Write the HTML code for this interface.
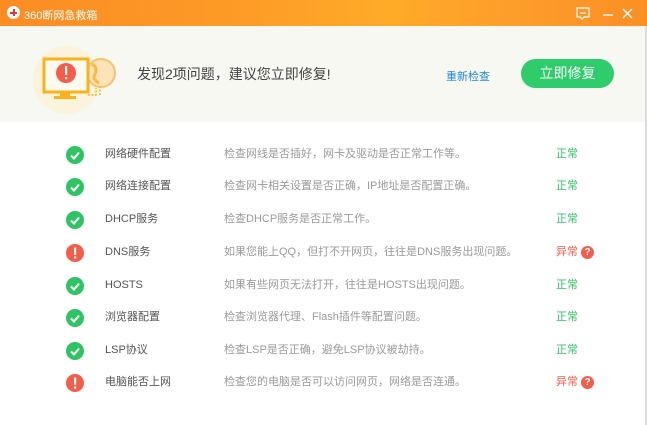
<!DOCTYPE html>
<html><head><meta charset="utf-8"><style>
*{margin:0;padding:0;box-sizing:border-box}
body{width:647px;height:425px;overflow:hidden;background:#fff;font-family:"Liberation Sans","Noto Sans CJK SC",sans-serif;position:relative}
.title{position:absolute;left:0;top:0;width:647px;height:26px;background:linear-gradient(90deg,#fb8c24 0%,#fd9a26 35%,#ffab28 60%,#fd9d2a 80%,#fb8f24 100%);color:#fff;font-size:12px}
.head{position:absolute;left:0;top:26px;width:647px;height:96px;background:#f7f8f1}
.rb{position:absolute;right:0;top:26px;width:2px;height:399px;background:#ddd}
.row{position:absolute;left:0;height:20px;width:640px;font-size:11px;line-height:14px}
.row .ic{position:absolute;left:66px;top:1px;width:18px;height:18px;border-radius:50%}
.row .n{position:absolute;left:105px;top:2px;color:#555}
.row .d{position:absolute;left:224px;top:2px;color:#9a9a9a}
.row .s{position:absolute;left:556px;top:2px;color:#2fc463}
.row .s.b{color:#f65c4a}
.q{position:absolute;left:581px;top:3px;width:13px;height:13px;border-radius:50%;background:#f65c4a;color:#fff;font-size:10px;font-weight:bold;text-align:center;line-height:13px}
</style></head><body>
<div class="title">
<div style="position:absolute;left:7px;top:6px;width:13px;height:13px;border-radius:50%;background:#fff"></div>
<div style="position:absolute;left:10px;top:11.5px;width:7px;height:2px;background:#e8352f"></div>
<div style="position:absolute;left:12.5px;top:9px;width:2px;height:7px;background:#e8352f"></div>
<div style="position:absolute;left:24px;top:7px;font-size:11px">360断网急救箱</div>
<svg style="position:absolute;left:575px;top:6px" width="70" height="16">
<path d="M2 2h12v9h-5l-2 2-2-2h-3z" fill="none" stroke="#fff" stroke-width="1.2"/><path d="M5 7h6" stroke="#fff" stroke-width="1.2"/>
<path d="M28 9h10" stroke="#fff" stroke-width="1.3"/>
<path d="M48 3l9 9M57 3l-9 9" stroke="#fff" stroke-width="1.4"/>
</svg>
</div>
<div class="head">
<div style="position:absolute;left:33px;top:20px;width:68px;height:68px;border-radius:50%;background:#fbf3dc"></div>
<svg style="position:absolute;left:40px;top:24px" width="80" height="80">
<circle cx="61" cy="23" r="14" fill="#fde3b8" stroke="#fbc16a" stroke-width="2"/>
<path d="M52 14q6 4 3 10q-3 5 4 9" fill="none" stroke="#fbb84a" stroke-width="3"/>
<path d="M48 45h8v-7M60 45v-8" fill="none" stroke="#f9b21c" stroke-width="1.5" stroke-dasharray="2 1.5"/>
<rect x="4" y="9" width="44" height="33" fill="#fffaf0" stroke="#f9b21c" stroke-width="3"/>
<rect x="20" y="42" width="10" height="5" fill="#f9b21c"/>
<rect x="14" y="46" width="22" height="3" fill="#f9b21c"/>
<circle cx="26" cy="23" r="10" fill="#f65c4a"/>
<rect x="25" y="16" width="2.2" height="9" fill="#fff"/><rect x="25" y="27" width="2.2" height="2.2" fill="#fff"/>
</svg>
<div style="position:absolute;left:137px;top:38px;font-size:14px;color:#444">发现2项问题，建议您立即修复!</div>
<div style="position:absolute;left:446px;top:42px;font-size:11px;color:#1f8ae0">重新检查</div>
<div style="position:absolute;left:521px;top:33px;width:93px;height:29px;border-radius:15px;background:#2ecc6a;color:#fff;font-size:14px;text-align:center;line-height:29px">立即修复</div>
</div>
<div class="rb"></div>

<div class="row" style="top:145px"><div class="ic" style="background:#2fc463"><svg width="18" height="18"><path d="M5 9.5l3 3 5-6" fill="none" stroke="#fff" stroke-width="2"/></svg></div><div class="n">网络硬件配置</div><div class="d">检查网线是否插好，网卡及驱动是否正常工作等。</div><div class="s">正常</div></div>
<div class="row" style="top:177px"><div class="ic" style="background:#2fc463"><svg width="18" height="18"><path d="M5 9.5l3 3 5-6" fill="none" stroke="#fff" stroke-width="2"/></svg></div><div class="n">网络连接配置</div><div class="d">检查网卡相关设置是否正确，IP地址是否配置正确。</div><div class="s">正常</div></div>
<div class="row" style="top:210px"><div class="ic" style="background:#2fc463"><svg width="18" height="18"><path d="M5 9.5l3 3 5-6" fill="none" stroke="#fff" stroke-width="2"/></svg></div><div class="n">DHCP服务</div><div class="d">检查DHCP服务是否正常工作。</div><div class="s">正常</div></div>
<div class="row" style="top:243px"><div class="ic" style="background:#f65c4a"><svg width="18" height="18"><rect x="8" y="3.5" width="2.2" height="7.5" fill="#fff"/><rect x="8" y="12.5" width="2.2" height="2.2" fill="#fff"/></svg></div><div class="n">DNS服务</div><div class="d">如果您能上QQ，但打不开网页，往往是DNS服务出现问题。</div><div class="s b">异常</div><div class="q">?</div></div>
<div class="row" style="top:276px"><div class="ic" style="background:#2fc463"><svg width="18" height="18"><path d="M5 9.5l3 3 5-6" fill="none" stroke="#fff" stroke-width="2"/></svg></div><div class="n">HOSTS</div><div class="d">如果有些网页无法打开，往往是HOSTS出现问题。</div><div class="s">正常</div></div>
<div class="row" style="top:308px"><div class="ic" style="background:#2fc463"><svg width="18" height="18"><path d="M5 9.5l3 3 5-6" fill="none" stroke="#fff" stroke-width="2"/></svg></div><div class="n">浏览器配置</div><div class="d">检查浏览器代理、Flash插件等配置问题。</div><div class="s">正常</div></div>
<div class="row" style="top:341px"><div class="ic" style="background:#2fc463"><svg width="18" height="18"><path d="M5 9.5l3 3 5-6" fill="none" stroke="#fff" stroke-width="2"/></svg></div><div class="n">LSP协议</div><div class="d">检查LSP是否正确，避免LSP协议被劫持。</div><div class="s">正常</div></div>
<div class="row" style="top:373px"><div class="ic" style="background:#f65c4a"><svg width="18" height="18"><rect x="8" y="3.5" width="2.2" height="7.5" fill="#fff"/><rect x="8" y="12.5" width="2.2" height="2.2" fill="#fff"/></svg></div><div class="n">电脑能否上网</div><div class="d">检查您的电脑是否可以访问网页，网络是否连通。</div><div class="s b">异常</div><div class="q">?</div></div>
</body></html>
